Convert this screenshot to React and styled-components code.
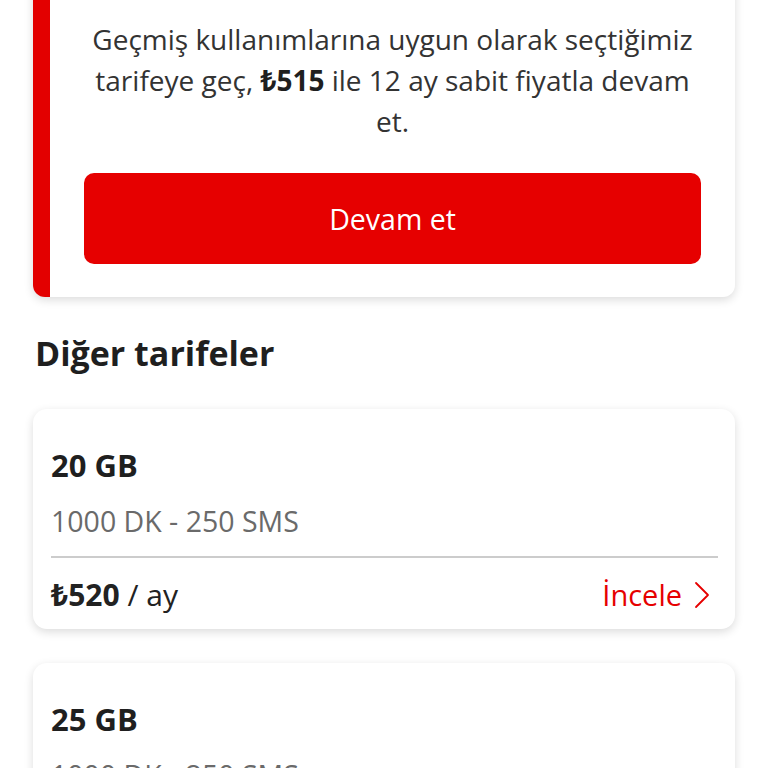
import React from 'react';
import styled, { createGlobalStyle } from 'styled-components';

const GlobalStyle = createGlobalStyle`
  body {
    margin: 0;
    background: #ffffff;
    font-family: "Open Sans", "Noto Sans", sans-serif;
    color: #222222;
  }
`;

const Page = styled.div`
  padding: 0 33px;
  height: 768px;
  overflow: hidden;
`;

const OfferCard = styled.section`
  margin-top: -24px;
  background: #ffffff;
  border-left: 17px solid #e30000;
  border-radius: 12px;
  box-shadow: 0 3px 10px rgba(0, 0, 0, 0.14);
  padding: 43px 34px 33px;
`;

const OfferText = styled.p`
  margin: 0;
  text-align: center;
  font-size: 28px;
  line-height: 41px;
  color: #333333;

  b {
    color: #1f1f1f;
  }
`;

const PrimaryButton = styled.button`
  display: block;
  width: 100%;
  height: 91px;
  margin-top: 31px;
  border: none;
  border-radius: 10px;
  background: #e60000;
  color: #ffffff;
  font-family: inherit;
  font-size: 28.5px;
  cursor: pointer;
`;

const SectionTitle = styled.h2`
  margin: 34px 2px 34px;
  font-size: 34px;
  line-height: 44px;
  font-weight: 700;
  color: #1f1f1f;
`;

const TariffList = styled.div`
  display: flex;
  flex-direction: column;
  gap: 34px;
`;

const TariffCard = styled.article`
  background: #ffffff;
  border-radius: 14px;
  box-shadow: 0 3px 10px rgba(0, 0, 0, 0.14);
  padding: 38px 17px 16px 18px;
`;

const TariffName = styled.div`
  font-size: 31px;
  line-height: 36px;
  font-weight: 700;
  color: #1f1f1f;
`;

const TariffDetails = styled.div`
  margin-top: 21px;
  font-size: 28.5px;
  line-height: 34px;
  color: #6a6a6a;
`;

const Divider = styled.hr`
  margin: 18px 0 19px;
  border: none;
  height: 2px;
  background: #cccccc;
`;

const PriceRow = styled.div`
  display: flex;
  align-items: center;
  justify-content: space-between;
  line-height: 36px;
`;

const Price = styled.div`
  font-size: 30px;
  color: #222222;

  b {
    font-weight: 700;
  }
`;

const DetailLink = styled.a`
  display: flex;
  align-items: center;
  gap: 12px;
  color: #e60000;
  font-size: 29px;
  text-decoration: none;
  padding-right: 8px;
`;

const Chevron = () => (
  <svg width="16" height="28" viewBox="0 0 16 28" fill="none">
    <path d="M2 2 L14 14 L2 26" stroke="#e60000" strokeWidth="1.8" strokeLinejoin="round" strokeLinecap="round" />
  </svg>
);

const tariffs = [
  { name: '20 GB', details: '1000 DK - 250 SMS', price: '₺520' },
  { name: '25 GB', details: '1000 DK - 250 SMS', price: '₺560' },
];

const App = () => (
  <>
    <GlobalStyle />
    <Page>
      <OfferCard>
        <OfferText>
          Geçmiş kullanımlarına uygun olarak seçtiğimiz tarifeye geç, <b>₺515</b> ile 12 ay sabit fiyatla devam et.
        </OfferText>
        <PrimaryButton>Devam et</PrimaryButton>
      </OfferCard>

      <SectionTitle>Diğer tarifeler</SectionTitle>

      <TariffList>
        {tariffs.map((t) => (
          <TariffCard key={t.name}>
            <TariffName>{t.name}</TariffName>
            <TariffDetails>{t.details}</TariffDetails>
            <Divider />
            <PriceRow>
              <Price>
                <b>{t.price}</b> / ay
              </Price>
              <DetailLink href="#">
                İncele <Chevron />
              </DetailLink>
            </PriceRow>
          </TariffCard>
        ))}
      </TariffList>
    </Page>
  </>
);

export default App;
